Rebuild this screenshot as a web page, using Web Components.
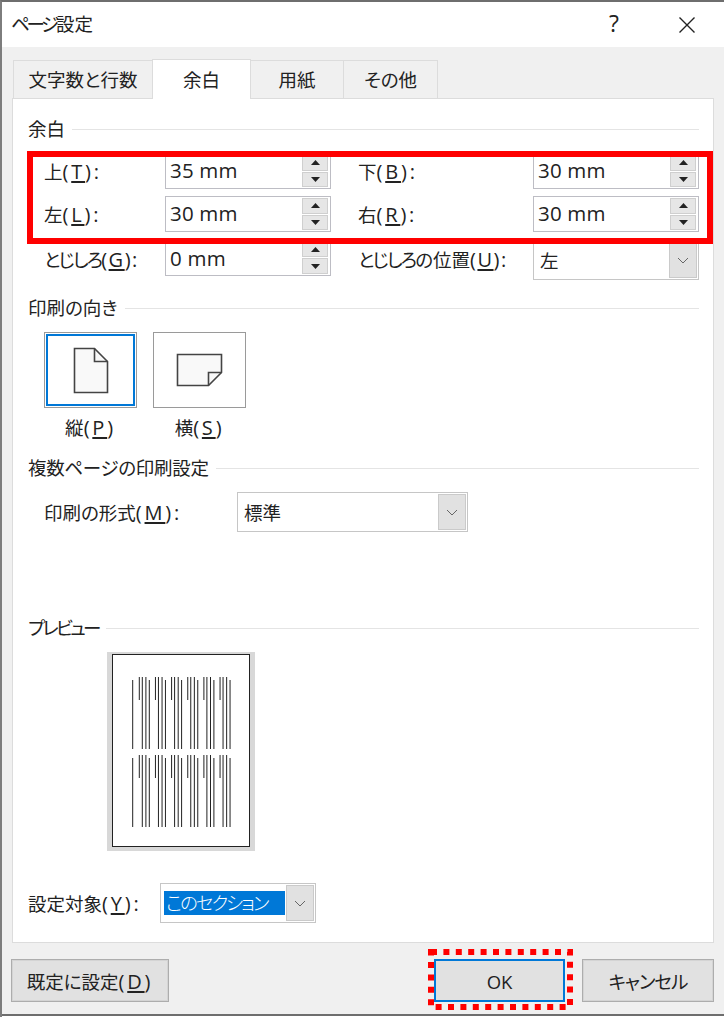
<!DOCTYPE html>
<html lang="ja">
<head>
<meta charset="utf-8">
<title>ページ設定</title>
<style>
    html, body { margin: 0; background: #fff; }
    body {
        font-family: "Open Sans", "Noto Sans CJK JP", sans-serif;
        font-size: 18.5px;
        color: #222;
        font-feature-settings: "palt";
    }
</style>
</head>
<body>
<page-dialog></page-dialog>

<script>
const CHEVRON = `<svg width="12" height="7" viewBox="0 0 12 7"><path d="M1 1l5 5 5-5" fill="none" stroke="#666" stroke-width="1"/></svg>`;
const LATIN_CSS = `.l { font-size: 20px; letter-spacing: 1.5px; } .w { letter-spacing: 2.8px; } u { text-underline-offset: 2px; }`;

// accelerator key in a label, as in (T):
const acc = (key, tail = '', cls = '') => `<span class="l ${cls}">(<u>${key}</u>)${tail}</span>`;

class GroupLine extends HTMLElement {
    connectedCallback() {
        this.attachShadow({ mode: 'open' });
        this.shadowRoot.innerHTML = `
            <style>
                :host { display: flex; align-items: center; height: 24px; line-height: 24px; gap: 7px; white-space: nowrap; }
                i { flex: 1; height: 1px; background: #e4e4e4; }
            </style>
            <slot></slot><i></i>
        `;
    }
}

class SpinField extends HTMLElement {
    connectedCallback() {
        this.attachShadow({ mode: 'open' });
        this.shadowRoot.innerHTML = `
            <style>
                :host { display: flex; box-sizing: border-box; height: 36px; border: 1px solid #bdbdc4; background: #fff; }
                .val { flex: 1; padding-left: 4px; font-size: 20.5px; line-height: 33px; letter-spacing: 0.2px; }
                :host(.low) .val { padding-top: 2px; }
                .arrows { width: 26px; margin: 1px 2px 1px 0; display: flex; flex-direction: column; gap: 1px; }
                .arrows span {
                    flex: 1; display: flex; align-items: center; justify-content: center;
                    background: #e6e6e6; border: 1px solid #cfcfcf; box-sizing: border-box;
                }
            </style>
            <div class="val">${this.getAttribute('value')}</div>
            <div class="arrows">
                <span><svg width="9" height="5" viewBox="0 0 9 5"><path d="M4.5 0L9 5H0z" fill="#222"/></svg></span>
                <span><svg width="9" height="5" viewBox="0 0 9 5"><path d="M0 0h9L4.5 5z" fill="#222"/></svg></span>
            </div>
        `;
    }
}

class ComboField extends HTMLElement {
    connectedCallback() {
        this.attachShadow({ mode: 'open' });
        const selected = this.hasAttribute('selected');
        this.shadowRoot.innerHTML = `
            <style>
                :host { display: flex; box-sizing: border-box; height: 40px; border: 1px solid #c6c6c6; background: #fff; }
                .val { flex: 1; padding-left: 6px; line-height: 40px; white-space: nowrap; }
                .val.sel { padding-left: 3px; display: flex; align-items: center; }
                .val.sel span {
                    flex: 1; height: 24px; line-height: 24px; margin-right: 1px; padding-left: 2px;
                    background: #0078d7; color: #fff; letter-spacing: -2px; font-weight: 300;
                }
                .btn {
                    width: 28px; margin: 1px 1px 1px 0; box-sizing: border-box;
                    border: 1px solid #cacaca; background: #e1e1e1;
                    display: flex; align-items: center; justify-content: center;
                }
            </style>
            <div class="val ${selected ? 'sel' : ''}">${selected ? `<span><slot></slot></span>` : `<slot></slot>`}</div>
            <div class="btn">${CHEVRON}</div>
        `;
    }
}

class MarginRows extends HTMLElement {
    connectedCallback() {
        this.attachShadow({ mode: 'open' });
        this.shadowRoot.innerHTML = `
            <style>
                :host {
                    display: grid; position: relative;
                    grid-template-columns: 121px 166px 27px 175px 166px;
                    grid-template-rows: 36px 36px 41px;
                    row-gap: 7px; margin: 12px 0 0 16px;
                }
                .label { line-height: 38px; height: 36px; white-space: nowrap; }
                .label.low { line-height: 42px; height: 41px; }
                .kana { letter-spacing: -1.8px; }
                .mark {
                    position: absolute; left: -17px; top: -2px; width: 686px; height: 93px;
                    box-sizing: border-box; border: 6px solid #f00;
                }
                spin-field.low { height: 37px; }
                ${LATIN_CSS}
            </style>
            <div class="label">上${acc('T', ':', 'w')}</div><spin-field value="35 mm"></spin-field><span></span>
            <div class="label">下${acc('B', ':', 'w')}</div><spin-field value="30 mm"></spin-field>
            <div class="label">左${acc('L', ':', 'w')}</div><spin-field value="30 mm"></spin-field><span></span>
            <div class="label">右${acc('R', ':', 'w')}</div><spin-field value="30 mm"></spin-field>
            <div class="label low"><span class="kana">とじしろ</span>${acc('G', ':')}</div><spin-field class="low" value="0 mm"></spin-field><span></span>
            <div class="label low"><span class="kana">とじしろ</span>の位置${acc('U', ':')}</div><combo-field style="margin-top:1px">左</combo-field>
            <div class="mark"></div>
        `;
    }
}

class OrientPicker extends HTMLElement {
    connectedCallback() {
        this.attachShadow({ mode: 'open' });
        this.shadowRoot.innerHTML = `
            <style>
                :host { display: flex; gap: 16px; margin: 12px 0 0 16px; }
                .opt { width: 93px; text-align: center; }
                .box {
                    box-sizing: border-box; height: 76px; border: 1px solid #9a9a9a;
                    display: flex; align-items: center; justify-content: center; background: #fff;
                }
                .box.on { box-shadow: inset 0 0 0 1px #fff, inset 0 0 0 3px #0078d7; }
                .cap { margin-top: 8px; line-height: 24px; }
                ${LATIN_CSS}
            </style>
            <div class="opt">
                <div class="box on">
                    <svg width="36" height="47" viewBox="0 0 36 47">
                        <path d="M1.5 1.5H21.5L34.5 14.5V45.5H1.5Z" fill="#f9f9f9" stroke="#444" stroke-width="1.6"/>
                        <path d="M21.5 1.5V14.5H34.5" fill="none" stroke="#444" stroke-width="1.6"/>
                    </svg>
                </div>
                <div class="cap">縦${acc('P', '', 'w')}</div>
            </div>
            <div class="opt">
                <div class="box">
                    <svg width="47" height="34" viewBox="0 0 47 34">
                        <path d="M1.5 1.5H45.5V19.5L32.5 32.5H1.5Z" fill="#f9f9f9" stroke="#444" stroke-width="1.6"/>
                        <path d="M45.5 19.5H32.5V32.5" fill="none" stroke="#444" stroke-width="1.6"/>
                    </svg>
                </div>
                <div class="cap">横${acc('S', '', 'w')}</div>
            </div>
        `;
    }
}

class PagePreview extends HTMLElement {
    connectedCallback() {
        this.attachShadow({ mode: 'open' });
        // coordinates below are relative to the black page edge (112, 654)
        let lines = '';
        const line = (x, y1, y2) => {
            lines += `<path d="M${x} ${y1}V${y2}" stroke="#222" stroke-width="1"/>`;
        };
        [0, 78].forEach(dy => {
            line(20.7, 26 + dy, 95 + dy);
            for (let i = 0; i < 6; i++) {
                const x = 27.3 + i * 16.15;
                line(x, 23 + dy, 46 + dy);
                line(x + 3, 23 + dy, 95 + dy);
                line(x + 6.6, 23 + dy, 95 + dy);
                line(x + 10, 26 + dy, 95 + dy);
            }
        });
        this.shadowRoot.innerHTML = `
            <style>
                :host {
                    display: block; box-sizing: border-box; width: 148px; height: 199px;
                    margin: 12px 0 0 79px; background: #d8d8d8; padding: 2px 5px 4px;
                }
                .page { box-sizing: border-box; height: 193px; background: #fff; border: 1px solid #222; }
                svg { display: block; margin: -1px; }
            </style>
            <div class="page">
                <svg width="138" height="193" viewBox="0 0 138 193">${lines}</svg>
            </div>
        `;
    }
}

class DlgButton extends HTMLElement {
    connectedCallback() {
        this.attachShadow({ mode: 'open' });
        this.shadowRoot.innerHTML = `
            <style>
                :host {
                    display: flex; position: relative; align-items: center; justify-content: center;
                    box-sizing: border-box; height: 43px; background: #e1e1e1;
                    border: 1px solid #adadad; box-shadow: inset 0 0 0 1px #d4d4d4;
                    white-space: nowrap; padding-top: 1px;
                }
                :host([primary]) { border: 2px solid #0078d7; box-shadow: none; }
                svg { position: absolute; left: -8px; top: -12px; }
            </style>
            <slot></slot>
            ${this.hasAttribute('primary') ? `
            <svg width="146" height="61" viewBox="0 0 146 61">
                <rect x="3" y="3" width="139" height="55" fill="none" stroke="#f00" stroke-width="6" stroke-dasharray="6 6.4"/>
            </svg>` : ''}
        `;
    }
}

class PageDialog extends HTMLElement {
    connectedCallback() {
        this.attachShadow({ mode: 'open' });
        this.shadowRoot.innerHTML = `
            <style>
                :host {
                    display: flex; flex-direction: column; box-sizing: border-box;
                    width: 724px; height: 1017px; background: #f0f0f0;
                    border-top: 2px solid #6e6e6e; border-left: 2px solid #7d7d7d;
                    box-shadow: inset 0 -1px 0 #fff, inset 0 -3px 0 #6e6e6e;
                }
                .title {
                    display: flex; align-items: center; height: 45px; flex: none; box-sizing: border-box;
                    padding: 0 0 3px 10px; background: #fff; white-space: nowrap;
                }
                .title b { font-weight: 400; flex: 1; margin-left: -1px; }
                .tight { letter-spacing: -3.3px; }
                .title .help { font-size: 23px; margin-right: 59px; }
                .title svg { margin: 3px 28px 0 0; }
                .tabs { display: flex; align-items: flex-end; height: 51px; flex: none; padding-left: 11px; }
                .tab {
                    box-sizing: border-box; height: 38px; line-height: 38px; text-align: center;
                    border: 1px solid #dcdcdc; border-bottom: 0; margin-right: -1px;
                }
                .tab.on {
                    height: 40px; margin-bottom: -1px; position: relative; z-index: 1;
                    background: #fff; line-height: 40px;
                }
                .panel {
                    box-sizing: border-box; width: 702px; height: 845px; margin-left: 10px; flex: none;
                    background: #fff; border: 1px solid #dcdcdc; padding: 18px 14px 0 15px;
                }
                .mt16 { margin-top: 16px; }
                .mt84 { margin-top: 84px; }
                .row { display: flex; align-items: center; white-space: nowrap; }
                .format { margin: 12px 0 0 16px; }
                .format > span { width: 193px; }
                .format combo-field { width: 231px; }
                .target { margin-top: 32px; }
                .target > span { width: 132px; }
                .target combo-field { width: 156px; }
                .foot { display: flex; margin-top: 16px; padding: 0 10px 0 9px; }
                .foot .ok { margin-left: auto; width: 131px; margin-right: 17px; }
                .foot .def { width: 158px; }
                .foot .cancel { width: 132px; letter-spacing: -1px; }
                ${LATIN_CSS}
            </style>
            <div class="title">
                <b><span class="tight">ページ</span>設定</b>
                <span class="help">?</span>
                <svg width="18" height="16" viewBox="0 0 18 16"><path d="M1.5 0.5L16.5 15.5M16.5 0.5L1.5 15.5" fill="none" stroke="#222" stroke-width="1.4"/></svg>
            </div>
            <div class="tabs">
                <div class="tab" style="width:140px">文字数と行数</div>
                <div class="tab on" style="width:99px">余白</div>
                <div class="tab" style="width:94px">用紙</div>
                <div class="tab" style="width:95px">その他</div>
            </div>
            <div class="panel">
                <group-line>余白</group-line>
                <margin-rows></margin-rows>
                <group-line class="mt16">印刷の向き</group-line>
                <orient-picker></orient-picker>
                <group-line class="mt16"><span style="letter-spacing:-.3px">複数ページの印刷設定</span></group-line>
                <div class="row format">
                    <span>印刷の形式${acc('M', ':', 'w')}</span>
                    <combo-field>標準</combo-field>
                </div>
                <group-line class="mt84"><span style="letter-spacing:-2.7px">プレビュー</span></group-line>
                <page-preview></page-preview>
                <div class="row target">
                    <span>設定対象${acc('Y', ':', 'w')}</span>
                    <combo-field selected>このセクション</combo-field>
                </div>
            </div>
            <div class="foot">
                <dlg-button class="def">既定に設定${acc('D', '', 'w')}</dlg-button>
                <dlg-button class="ok" primary>OK</dlg-button>
                <dlg-button class="cancel">キャンセル</dlg-button>
            </div>
        `;
    }
}

customElements.define('group-line', GroupLine);
customElements.define('spin-field', SpinField);
customElements.define('combo-field', ComboField);
customElements.define('margin-rows', MarginRows);
customElements.define('orient-picker', OrientPicker);
customElements.define('page-preview', PagePreview);
customElements.define('dlg-button', DlgButton);
customElements.define('page-dialog', PageDialog);
</script>
</body>
</html>
